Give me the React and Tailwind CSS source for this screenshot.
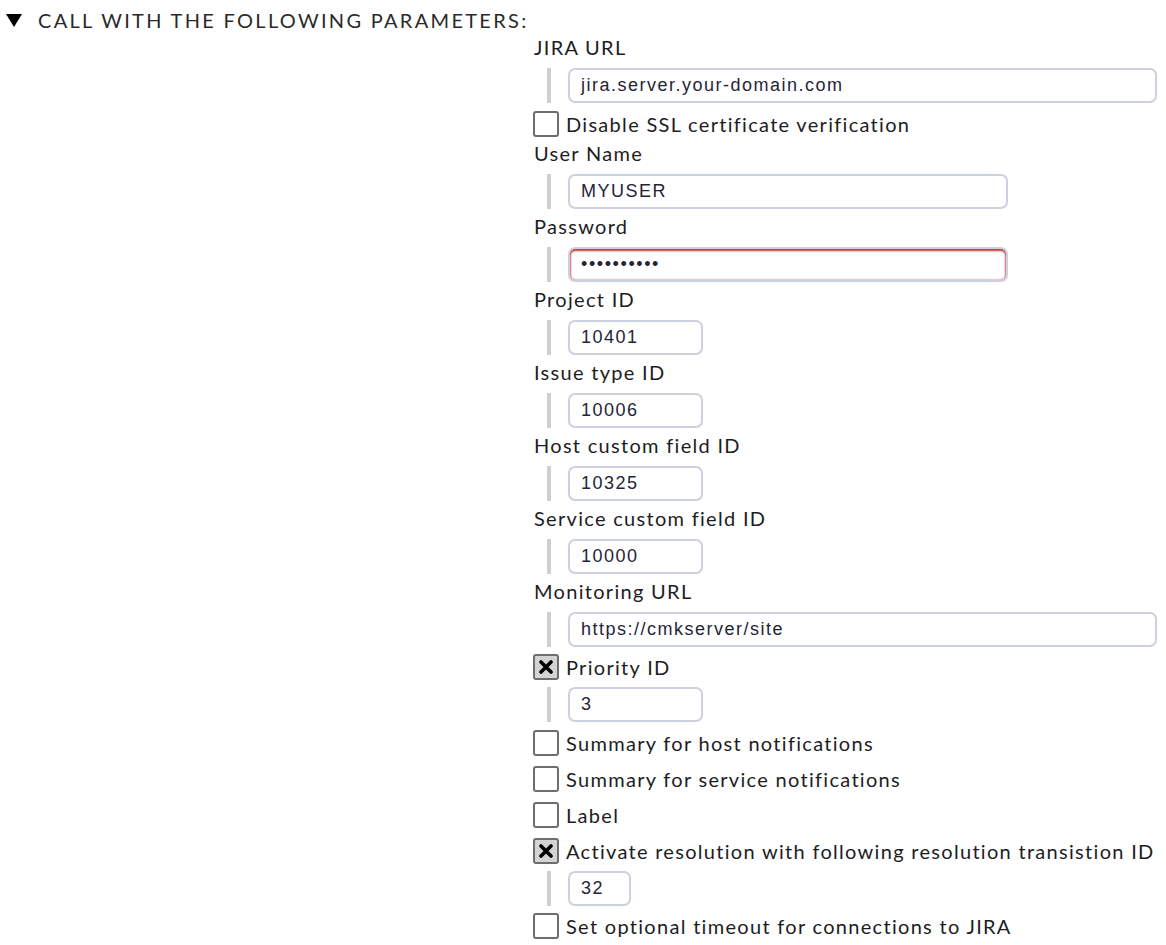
import React from "react";

const lato = { fontFamily: "Lato, 'Noto Sans', sans-serif" };

function Label({ children }) {
  return (
    <div className="h-[24px] leading-[24px] text-[20px] tracking-[1.3px] text-[#1d1d1f]">
      {children}
    </div>
  );
}

function Field({ value, width, password, mt = "mt-[9px]", mb = "mb-[5px]" }) {
  return (
    <div className={`flex ${mt} ${mb}`}>
      <div className="ml-[13px] w-[4px] bg-[#cfcfcf]" />
      <div className="ml-[17px]">
        <div
          className={`h-[35px] rounded-[7px] border-2 bg-white flex items-center px-[11px] text-[18px] tracking-[1.5px] text-[#1f2536] ${
            password
              ? "border-[#cdd0de] shadow-[inset_0_2px_2px_#c23b3b,inset_1px_0_2px_#e08a8a,inset_-1px_0_2px_#e08a8a]"
              : "border-[#cdd0de]"
          }`}
          style={{ width, fontFamily: "'Liberation Sans', Arial, sans-serif" }}
        >
          {password ? (
            <span className="tracking-[1.6px] text-[18px]">••••••••••</span>
          ) : (
            value
          )}
        </div>
      </div>
    </div>
  );
}

function Check({ checked, children, className = "" }) {
  return (
    <div className={`flex items-center h-[26px] ${className}`}>
      <div
        className={`w-[26px] h-[26px] shrink-0 rounded-[3px] border-2 border-[#6e6e6e] flex items-center justify-center ${
          checked ? "bg-[#d4d4d4]" : "bg-white"
        }`}
      >
        {checked && (
          <svg width="14" height="14" viewBox="0 0 14 14">
            <path d="M2 2 L12 12 M12 2 L2 12" stroke="#000" strokeWidth="3.6" strokeLinecap="round" />
          </svg>
        )}
      </div>
      <div className="ml-[7px] text-[20px] tracking-[1.3px] text-[#1d1d1f] leading-[24px] whitespace-nowrap">
        {children}
      </div>
    </div>
  );
}

export default function App() {
  return (
    <div className="w-[1166px] h-[945px] bg-white overflow-hidden" style={lato}>
      <div className="flex items-center h-[26px] mt-[7px]">
        <svg className="ml-[6px]" width="16" height="14" viewBox="0 0 16 14">
          <path d="M0 1 L16 1 L8 14 Z" fill="#000" />
        </svg>
        <div className="ml-[16px] text-[20px] tracking-[2.3px] text-[#2a2a2a] uppercase whitespace-nowrap">
          Call with the following parameters:
        </div>
      </div>
      <div className="ml-[534px] mt-[2px]">
        <Label>JIRA URL</Label>
        <Field value="jira.server.your-domain.com" width={589} mb="mb-[8px]" />
        <div className="ml-[-1px]">
          <Check>Disable SSL certificate verification</Check>
        </div>
        <div className="mt-[4px]">
          <Label>User Name</Label>
        </div>
        <Field value="MYUSER" width={440} />
        <Label>Password</Label>
        <Field password width={440} />
        <Label>Project ID</Label>
        <Field value="10401" width={135} />
        <Label>Issue type ID</Label>
        <Field value="10006" width={135} />
        <Label>Host custom field ID</Label>
        <Field value="10325" width={135} />
        <Label>Service custom field ID</Label>
        <Field value="10000" width={135} />
        <Label>Monitoring URL</Label>
        <Field value="https://cmkserver/site" width={589} mb="mb-[7px]" />
        <div className="ml-[-1px]">
          <Check checked>Priority ID</Check>
        </div>
        <Field value="3" width={135} mt="mt-[7px]" mb="mb-[8px]" />
        <div className="ml-[-1px] flex flex-col gap-[10px]">
          <Check>Summary for host notifications</Check>
          <Check>Summary for service notifications</Check>
          <Check>Label</Check>
          <Check checked>Activate resolution with following resolution transistion ID</Check>
        </div>
        <Field value="32" width={63} mt="mt-[7px]" mb="mb-[7px]" />
        <div className="ml-[-1px]">
          <Check>Set optional timeout for connections to JIRA</Check>
        </div>
      </div>
    </div>
  );
}
